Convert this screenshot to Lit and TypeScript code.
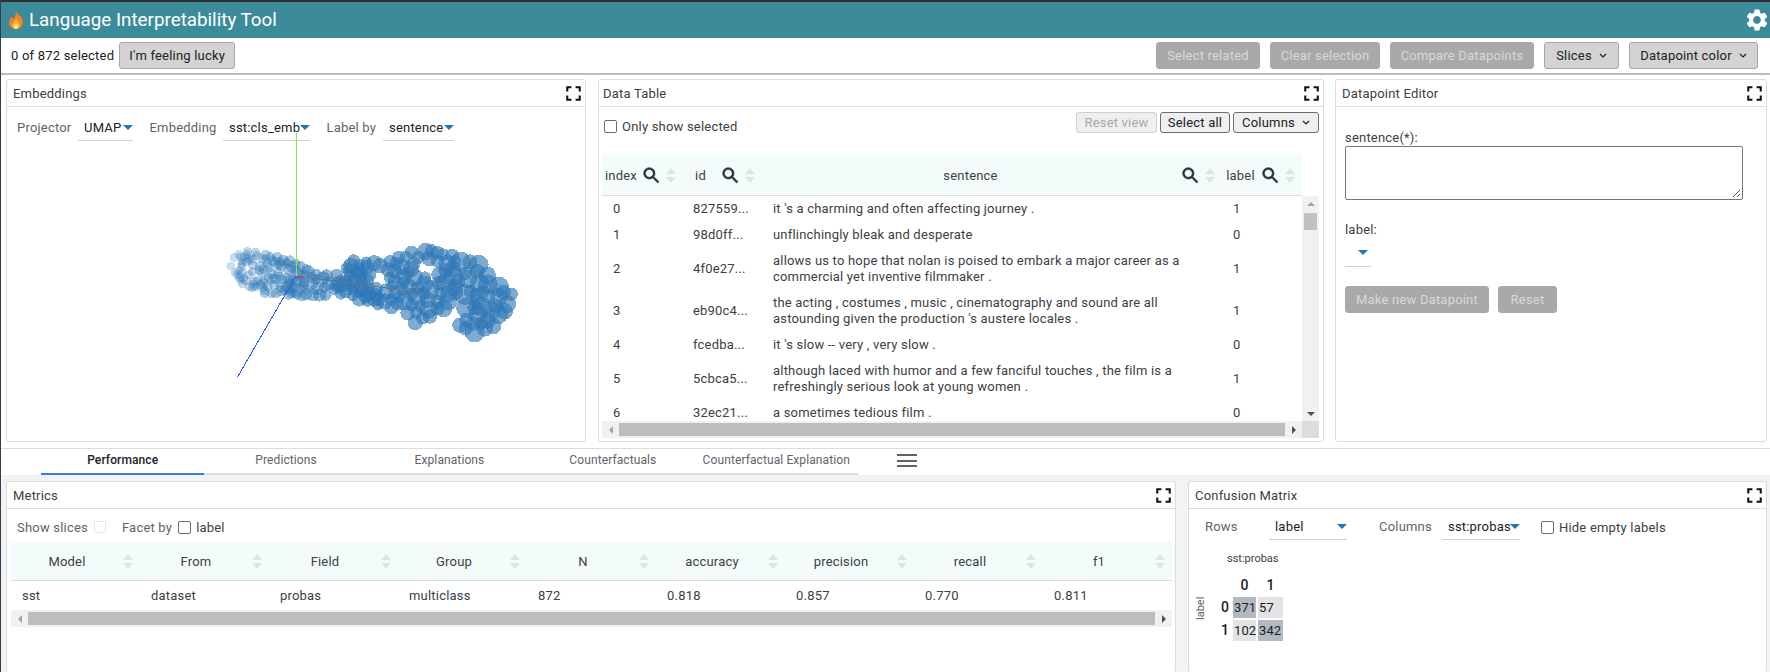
import { LitElement, html, css, svg } from "lit";
import { customElement } from "lit/decorators.js";

const FULLSCREEN = "M7 14H5v5h5v-2H7v-3zm-2-4h2V7h3V5H5v5zm12 7h-3v2h5v-5h-2v3zM14 5v2h3v3h2V5h-5z";
const SEARCH = "M15.5 14h-.79l-.28-.27A6.47 6.47 0 0 0 16 9.5 6.5 6.5 0 1 0 9.5 16c1.61 0 3.09-.59 4.23-1.57l.27.28v.79l5 4.99L20.49 19l-4.99-5zm-6 0C7.01 14 5 11.99 5 9.5S7.01 5 9.5 5 14 7.01 14 9.5 11.99 14 9.5 14z";
const GEAR = "M19.14 12.94c.04-.3.06-.61.06-.94 0-.32-.02-.64-.07-.94l2.03-1.58a.49.49 0 0 0 .12-.61l-1.92-3.32a.488.488 0 0 0-.59-.22l-2.39.96c-.5-.38-1.03-.7-1.62-.94l-.36-2.54a.484.484 0 0 0-.48-.41h-3.84c-.24 0-.43.17-.47.41l-.36 2.54c-.59.24-1.13.57-1.62.94l-2.39-.96c-.22-.08-.47 0-.59.22L2.74 8.87c-.12.21-.08.47.12.61l2.03 1.58c-.05.3-.09.63-.09.94s.02.64.07.94l-2.03 1.58a.49.49 0 0 0-.12.61l1.92 3.32c.12.22.37.29.59.22l2.39-.96c.5.38 1.03.7 1.62.94l.36 2.54c.05.24.24.41.48.41h3.84c.24 0 .44-.17.47-.41l.36-2.54c.59-.24 1.13-.56 1.62-.94l2.39.96c.22.08.47 0 .59-.22l1.92-3.32c.12-.22.07-.47-.12-.61l-2.01-1.58zM12 15.6c-1.98 0-3.6-1.62-3.6-3.6s1.62-3.6 3.6-3.6 3.6 1.62 3.6 3.6-1.62 3.6-3.6 3.6z";

const ROWS = [
  ["0", "827559...", ["it 's a charming and often affecting journey ."], "1"],
  ["1", "98d0ff...", ["unflinchingly bleak and desperate"], "0"],
  ["2", "4f0e27...", ["allows us to hope that nolan is poised to embark a major career as a", "commercial yet inventive filmmaker ."], "1"],
  ["3", "eb90c4...", ["the acting , costumes , music , cinematography and sound are all", "astounding given the production 's austere locales ."], "1"],
  ["4", "fcedba...", ["it 's slow -- very , very slow ."], "0"],
  ["5", "5cbca5...", ["although laced with humor and a few fanciful touches , the film is a", "refreshingly serious look at young women ."], "1"],
  ["6", "32ec21...", ["a sometimes tedious film ."], "0"],
] as const;

const METRIC_HEAD = ["Model", "From", "Field", "Group", "N", "accuracy", "precision", "recall", "f1"];
const METRIC_ROW = ["sst", "dataset", "probas", "multiclass", "872", "0.818", "0.857", "0.770", "0.811"];
const TABS = ["Performance", "Predictions", "Explanations", "Counterfactuals", "Counterfactual Explanation"];

// Silhouette of the projected point cloud, in page coordinates.
const OUTLINE: [number, number][] = ([
  [78, 375], [95, 325], [150, 320], [210, 332], [260, 345], [300, 360], [350, 390], [410, 388], [408, 368], [450, 343],
  [510, 348], [550, 340], [590, 333], [630, 318], [680, 306], [750, 323], [800, 343], [850, 353], [880, 408], [940, 423],
  [950, 500], [908, 535], [892, 578], [790, 604], [750, 560], [778, 492], [720, 528], [700, 554], [650, 574], [618, 548],
  [603, 522], [560, 522], [500, 496], [440, 494], [420, 475], [340, 488], [290, 482], [220, 481], [170, 466], [105, 434],
] as [number, number][]).map(([x, y]) => [200 + x / 3, 140 + y / 3] as [number, number]);

function inside(x: number, y: number) {
  let c = false;
  for (let i = 0, j = OUTLINE.length - 1; i < OUTLINE.length; j = i++) {
    const [xi, yi] = OUTLINE[i];
    const [xj, yj] = OUTLINE[j];
    if (yi > y !== yj > y && x < ((xj - xi) * (y - yi)) / (yj - yi) + xi) c = !c;
  }
  return c;
}

function makePoints() {
  let a = 20240611;
  const rnd = () => {
    a = (a + 0x6d2b79f5) | 0;
    let t = Math.imul(a ^ (a >>> 15), 1 | a);
    t = (t + Math.imul(t ^ (t >>> 7), 61 | t)) ^ t;
    return ((t ^ (t >>> 14)) >>> 0) / 4294967296;
  };
  const pts: { x: number; y: number; r: number; o: number }[] = [];
  const holes = [[378, 278, 3], [427, 268, 2]];
  const fill = (x0: number, x1: number, count: number, minGap: number) => {
    let placed = 0;
    let guard = 0;
    while (placed < count && guard++ < 40000) {
      const x = x0 + rnd() * (x1 - x0);
      const y = 243 + rnd() * 100;
      const t = Math.min(1, Math.max(0, (x - 225) / 230));
      const r = 4.2 + t * (2.2 + rnd() * 4.2);
      const e = r * 0.7;
      if (![[0, 0], [e, 0], [-e, 0], [0, e], [0, -e]].every(([u, v]) => inside(x + u, y + v))) continue;
      if (holes.some(([hx, hy, hr]) => Math.hypot(x - hx, y - hy) < hr + r)) continue;
      if (pts.some((p) => Math.hypot(p.x - x, p.y - y) < minGap * Math.min(r, p.r))) continue;
      pts.push({ x, y, r, o: 0.24 + Math.min(1, t * 1.8) * 0.38 });
      placed++;
    }
  };
  fill(225, 300, 95, 0.55);
  fill(300, 380, 65, 0.6);
  fill(380, 520, 105, 0.85);
  return pts;
}
const POINTS = makePoints();

@customElement("app-root")
export class AppRoot extends LitElement {
  static styles = css`
    :host {
      display: block;
      width: 1770px;
      height: 672px;
      overflow: hidden;
      font-family: Roboto, "Noto Sans", sans-serif;
      font-size: 13px;
      letter-spacing: 0.2px;
      color: #202124;
      background: #fff;
    }
    * { box-sizing: border-box; }
    .page { height: 672px; display: flex; flex-direction: column; border-left: 1px solid #3a3a4a; }
    .app-bar {
      flex: 0 0 38px;
      border-top: 2px solid #2d2f33;
      background: #3c8b9b;
      display: flex;
      align-items: center;
      padding: 0 0 0 7px;
      color: #fff;
      font-size: 18.8px;
      letter-spacing: 0;
      gap: 5px;
    }
    .app-bar .title { flex: 1; }
    .flame { width: 16px; height: 18px; }
    .gear { width: 26px; height: 26px; fill: #fff; }
    .toolbar {
      flex: 0 0 37px;
      border-bottom: 2px solid #bdbdbd;
      display: flex;
      align-items: center;
      padding: 0 12px 0 11px;
      gap: 10px;
    }
    .toolbar .sel { margin-right: -5px; margin-left: -1px; }
    .spacer { flex: 1; }
    .btn {
      height: 27px;
      display: inline-flex;
      align-items: center;
      justify-content: center;
      background: #d3d3d3;
      border: 1px solid #a6a6a6;
      border-radius: 3px;
      color: #202124;
      white-space: nowrap;
    }
    .btn.off { background: #a9a9a9; border-color: #a9a9a9; color: #d8d8d8; }
    .chev { width: 8px; height: 5px; margin-left: 7px; fill: none; stroke: currentColor; stroke-width: 1.2; }
    .top {
      flex: 0 0 374px;
      min-height: 0;
      display: flex;
      padding: 4px 3px 6px 5px;
      gap: 12px;
      border-bottom: 1px solid #dadce0;
    }
    .panel {
      position: relative;
      background: #fff;
      border: 1px solid #dadce0;
      border-radius: 3px;
      display: flex;
      flex-direction: column;
      min-width: 0;
      min-height: 0;
    }
    .p-emb { flex: 0 0 580px; }
    .p-data { flex: 0 0 726px; margin-right: -1px; }
    .p-edit { flex: 0 0 432px; }
    .p-title {
      flex: 0 0 27px;
      display: flex;
      align-items: center;
      justify-content: space-between;
      border-bottom: 1px solid #dadce0;
      padding: 0 0 0 6px;
      color: #3c4043;
    }
    .p-data .p-title { padding-left: 4px; }
    .fs { width: 25px; height: 25px; fill: #111; margin-right: -1px; }
    .controls { display: flex; align-items: flex-start; padding: 11px 0 0 10px; }
    .ctl-label { color: #5f6368; line-height: 20px; }
    .select {
      position: relative;
      height: 23px;
      border-bottom: 1px solid #d0d0d0;
      padding-left: 6px;
      line-height: 20px;
      color: #202124;
    }
    .caret {
      position: absolute;
      right: 0;
      top: 7px;
      width: 0;
      height: 0;
      border-left: 5px solid transparent;
      border-right: 5px solid transparent;
      border-top: 5.5px solid #1f78b4;
    }
    .scatter { position: absolute; left: 0; top: 0; width: 580px; height: 363px; pointer-events: none; }
    .cb {
      width: 13px;
      height: 13px;
      border: 1.5px solid #6b6b6b;
      border-radius: 2px;
      background: #fff;
      flex: none;
    }
    .dt-bar { display: flex; justify-content: space-between; padding: 5px 4px 0 5px; flex: 0 0 48px; }
    .only { display: flex; align-items: center; gap: 5px; height: 24px; margin-top: 2px; color: #3c4043; }
    .dt-btns { display: flex; gap: 3px; }
    .dt-btns .btn { height: 21px; background: #efefef; border-color: #6d6d6d; }
    .dt-btns .btn.off { border-color: #d0d0d0; color: #a9a9a9; }
    .grid-wrap { margin-left: 3px; margin-right: 4px; flex: 1; min-height: 0; display: flex; flex-direction: column; }
    .thead {
      flex: 0 0 41px;
      margin-right: 17px;
      background: #f4fcfb;
      border-bottom: 1px solid #dadce0;
      display: grid;
      grid-template-columns: 80px 80px 460px 80px;
      color: #3c4043;
    }
    .th { display: flex; align-items: center; padding-right: 7px; gap: 8px; }
    .th .name { flex: 1; text-align: center; padding-left: 3px; }
    .search { width: 21px; height: 21px; margin: 0 -4px; fill: #263238; stroke: #263238; stroke-width: 0.7; flex: none; }
    .sort { width: 10px; height: 16px; flex: none; display: flex; flex-direction: column; justify-content: center; gap: 3px; align-items: center; }
    .up, .down { width: 0; height: 0; border-left: 5px solid transparent; border-right: 5px solid transparent; }
    .up { border-bottom: 6px solid #dfe3e5; }
    .down { border-top: 6px solid #dfe3e5; }
    .tbody-row { flex: 1; min-height: 0; display: flex; }
    .tbody { flex: 1; overflow: hidden; }
    .tr { display: grid; grid-template-columns: 80px 80px 460px 80px; align-items: center; padding: 5px 0; line-height: 16px; color: #3c4043; }
    .td { padding-left: 11px; }
    .vbar { flex: 0 0 17px; background: #f1f1f1; position: relative; display: flex; flex-direction: column; align-items: center; justify-content: space-between; padding: 6px 0 5px; }
    .vthumb { position: absolute; left: 2px; right: 2px; top: 17px; height: 17px; background: #c1c1c1; }
    .tri-u, .tri-d { width: 0; height: 0; border-left: 4px solid transparent; border-right: 4px solid transparent; }
    .tri-u { border-bottom: 4px solid #a3a3a3; }
    .tri-d { border-top: 4px solid #505050; }
    .hbar { flex: 0 0 17px; height: 17px; background: #f1f1f1; display: flex; align-items: center; }
    .hbar .thumb { flex: 1; height: 13px; background: #bdbdbd; }
    .tri-l, .tri-r { width: 0; height: 0; border-top: 4px solid transparent; border-bottom: 4px solid transparent; margin: 0 6.5px; flex: none; }
    .tri-l { border-right: 4px solid #a3a3a3; }
    .tri-r { border-left: 4px solid #505050; }
    .corner { flex: 0 0 17px; height: 17px; background: #dcdcdc; }
    .dt-hbar { display: flex; margin-bottom: 3px; flex: 0 0 17px; }
    .dt-hbar .hbar { flex: 1; }
    .edit-body { padding: 0 9px; flex: 1; display: flex; flex-direction: column; }
    .edit-label { line-height: 16px; color: #3c4043; }
    .l-sentence { margin-top: 23px; }
    .l-label { margin-top: 22px; }
    .textarea { width: 398px; height: 54px; border: 1px solid #767676; border-radius: 2px; position: relative; }
    .grip { position: absolute; right: 1px; bottom: 1px; width: 9px; height: 9px; }
    .edit-select { width: 26px; height: 25px; border-bottom: 1px solid #d0d0d0; position: relative; margin-top: 4px; }
    .edit-select .caret { right: 3px; top: 8px; }
    .edit-btns { display: flex; gap: 9px; margin-top: 19px; }
    .tabs { flex: 0 0 26px; display: flex; align-items: center; padding-left: 40px; background: #fff; }
    .tab {
      width: 163.4px;
      height: 26px;
      display: flex;
      align-items: center;
      justify-content: center;
      border-bottom: 2px solid #dadce0;
      color: #5f6368;
      padding-bottom: 2px;
      font-size: 12px;
      letter-spacing: 0.1px;
    }
    .tab.on { color: #202124; border-bottom: 2px solid #3b78e7; font-weight: 500; }
    .burger { width: 20px; height: 13px; margin: 0 0 3px 39px; display: flex; flex-direction: column; justify-content: space-between; }
    .burger i { display: block; height: 2px; background: #5f6368; }
    .bottom { flex: 1; min-height: 0; background: #f1f3f4; display: flex; padding: 6px 3px 0 5px; gap: 12px; }
    .p-met { flex: 0 0 1170px; border-bottom: none; }
    .p-cm { flex: 1; border-bottom: none; }
    .met-controls { display: flex; align-items: center; flex: 0 0 33px; padding: 3px 0 0 10px; color: #5f6368; }
    .met-controls .cb { margin-left: 6px; }
    .cb.light { border: 1px solid #e6e6e6; width: 12px; height: 12px; }
    .facet { margin-left: 16px; }
    .facet-val { margin-left: 5px; color: #3c4043; }
    .met-grid { margin: 0 3px 0 4px; }
    .m-head, .m-row { display: grid; grid-template-columns: repeat(9, 129px); }
    .m-head { height: 39px; background: #f4fcfb; border-bottom: 1px solid #dadce0; color: #3c4043; }
    .m-th { display: flex; align-items: center; padding-right: 7px; }
    .m-th .name { flex: 1; text-align: center; }
    .m-row { height: 29px; align-items: center; color: #3c4043; }
    .m-td { padding-left: 11px; }
    .cm-controls { display: flex; align-items: flex-start; padding: 8px 0 0 16px; }
    .cm-hide { display: flex; align-items: center; gap: 5px; margin-left: 21px; height: 20px; color: #3c4043; }
    .matrix { display: grid; grid-template-columns: 22px 17px 25px 25px; margin: 11px 0 0 5px; color: #202124; }
    .mx-top { grid-column: 2 / 5; font-size: 11px; color: #3c4043; height: 26px; line-height: 16px; padding-left: 11px; letter-spacing: 0; }
    .mx-head { height: 20px; line-height: 16px; text-align: center; font-weight: 500; font-size: 14px; padding-right: 2px; }
    .mx-head.b { padding-right: 0; }
    .mx-head.first { grid-column: 3; }
    .mx-side { grid-row: 3 / 5; grid-column: 1; writing-mode: vertical-rl; transform: rotate(180deg); font-size: 11px; text-align: right; color: #5f6368; justify-self: start; height: 44px; letter-spacing: 0; }
    .mx-rh { grid-column: 2; font-weight: 500; font-size: 14px; text-align: right; padding-right: 4px; line-height: 21px; height: 23px; letter-spacing: 0; }
    .mx-c { height: 21px; margin: 0 2px 2px 0; line-height: 21px; padding-left: 1px; letter-spacing: 0.1px; }
    .mx-c.b { margin-right: 0; }
    .hi { background: #b3b9c0; }
    .lo { background: #e3e3e3; }
    .sp { flex: 0 0 16.5px; }
    .sp-cm { flex: 0 0 32px; }
  `;

  private fs() {
    return html`<svg class="fs" viewBox="0 0 24 24"><path d="${FULLSCREEN}"></path></svg>`;
  }
  private sort() {
    return html`<span class="sort"><span class="up"></span><span class="down"></span></span>`;
  }
  private select(text: string, width: number) {
    return html`<div class="select" style="width:${width}px">${text}<span class="caret"></span></div>`;
  }
  private chev() {
    return html`<svg class="chev" viewBox="0 0 8 5"><path d="M1 1l3 3 3-3"></path></svg>`;
  }
  private btn(text: string, w: number, off = false, chev = false) {
    return html`<div class="btn ${off ? "off" : ""}" style="width:${w}px">${text}${chev ? this.chev() : ""}</div>`;
  }
  private ctlLabel(text: string, width: number) {
    return html`<div class="ctl-label" style="width:${width}px">${text}</div>`;
  }

  private scatter() {
    return html`<svg class="scatter" viewBox="6 79 580 363">
      ${POINTS.map((p) => svg`<circle cx=${p.x.toFixed(1)} cy=${p.y.toFixed(1)} r=${p.r.toFixed(1)} fill="#2f78b7" fill-opacity=${p.o.toFixed(2)} shape-rendering="crispEdges"></circle>`)}
      <g shape-rendering="crispEdges">
        <line x1="295" y1="275" x2="430" y2="293" stroke="#6b7480" stroke-width="1"></line>
        <line x1="295.500" y1="275" x2="295.500" y2="132" stroke="#85e650" stroke-width="1"></line>
        <line x1="295" y1="275.500" x2="303" y2="275.500" stroke="#e8333a" stroke-width="1"></line>
        <line x1="295" y1="275" x2="236.500" y2="376" stroke="#2a5cf0" stroke-width="1"></line>
      </g>
    </svg>`;
  }

  render() {
    return html`<div class="page">
      <div class="app-bar">
        <svg class="flame" viewBox="0 0 16 18">
          <path d="M8 0c1 3 5 5 6.500 8.500C16 12.500 13.500 18 8 18S0 13.500 1.500 9.500C2 8 3 7 3.500 5.500 4.500 6.500 5 7.500 5 8.500 6.500 6 8.500 3.500 8 0z" fill="#f4801f"></path>
          <path d="M8.200 7c.5 2.300 4 3.800 4 7 0 2.300-1.900 4-4.200 4s-4.200-1.700-4.200-3.900C3.800 11.600 7.500 10 8.200 7z" fill="#fbb034"></path>
          <path d="M8.100 11.500c.4 1.300 2 2 2 3.700 0 1.500-1 2.800-2.100 2.800s-2.100-1.200-2.100-2.600c0-1.700 1.800-2.500 2.200-3.900z" fill="#ffe27a"></path>
        </svg>
        <div class="title">Language Interpretability Tool</div>
        <svg class="gear" viewBox="0 0 24 24"><path d="${GEAR}"></path></svg>
      </div>
      <div class="toolbar">
        <div class="sel">0 of 872 selected</div>
        ${this.btn("I'm feeling lucky", 116)}
        <div class="spacer"></div>
        ${this.btn("Select related", 104, true)}
        ${this.btn("Clear selection", 110, true)}
        ${this.btn("Compare Datapoints", 144, true)}
        ${this.btn("Slices", 75, false, true)}
        ${this.btn("Datapoint color", 129, false, true)}
      </div>
      <div class="top">
        <div class="panel p-emb">
          <div class="p-title">Embeddings${this.fs()}</div>
          <div class="controls">
            ${this.ctlLabel("Projector", 61)}
            ${this.select("UMAP", 55)}
            <div class="sp"></div>
            ${this.ctlLabel("Embedding", 73.5)}
            ${this.select("sst:cls_emb", 87)}
            <div class="sp"></div>
            ${this.ctlLabel("Label by", 56.5)}
            ${this.select("sentence", 71)}
          </div>
          ${this.scatter()}
        </div>
        <div class="panel p-data">
          <div class="p-title">Data Table${this.fs()}</div>
          <div class="dt-bar">
            <div class="only"><span class="cb"></span>Only show selected</div>
            <div class="dt-btns">
              ${this.btn("Reset view", 81, true)}
              ${this.btn("Select all", 70)}
              ${this.btn("Columns", 86, false, true)}
            </div>
          </div>
          <div class="grid-wrap">
            <div class="thead">
              ${["index", "id", "sentence", "label"].map(
                (n) => html`<div class="th"><span class="name">${n}</span><svg class="search" viewBox="0 0 24 24"><path d="${SEARCH}"></path></svg>${this.sort()}</div>`
              )}
            </div>
            <div class="tbody-row">
              <div class="tbody">
                ${ROWS.map(
                  (r) => html`<div class="tr">
                    <div class="td">${r[0]}</div>
                    <div class="td">${r[1]}</div>
                    <div class="td">${(r[2] as readonly string[]).map((l) => html`<div>${l}</div>`)}</div>
                    <div class="td">${r[3]}</div>
                  </div>`
                )}
              </div>
              <div class="vbar"><span class="tri-u"></span><div class="vthumb"></div><span class="tri-d"></span></div>
            </div>
            <div class="dt-hbar">
              <div class="hbar"><span class="tri-l"></span><div class="thumb"></div><span class="tri-r"></span></div>
              <div class="corner"></div>
            </div>
          </div>
        </div>
        <div class="panel p-edit">
          <div class="p-title">Datapoint Editor${this.fs()}</div>
          <div class="edit-body">
            <div class="edit-label l-sentence">sentence(*):</div>
            <div class="textarea">
              <svg class="grip" viewBox="0 0 9 9"><path d="M1 8l7-7M5 8l3-3" stroke="#555" stroke-width="1"></path></svg>
            </div>
            <div class="edit-label l-label">label:</div>
            <div class="edit-select"><span class="caret"></span></div>
            <div class="edit-btns">
              ${this.btn("Make new Datapoint", 144, true)}
              ${this.btn("Reset", 59, true)}
            </div>
          </div>
        </div>
      </div>
      <div class="tabs">
        ${TABS.map((t, i) => html`<div class="tab ${i === 0 ? "on" : ""}">${t}</div>`)}
        <div class="burger"><i></i><i></i><i></i></div>
      </div>
      <div class="bottom">
        <div class="panel p-met">
          <div class="p-title">Metrics${this.fs()}</div>
          <div class="met-controls">
            <span>Show slices</span><span class="cb light"></span>
            <span class="facet">Facet by</span><span class="cb"></span>
            <span class="facet-val">label</span>
          </div>
          <div class="met-grid">
            <div class="m-head">
              ${METRIC_HEAD.map((h) => html`<div class="m-th"><span class="name">${h}</span>${this.sort()}</div>`)}
            </div>
            <div class="m-row">${METRIC_ROW.map((c) => html`<div class="m-td">${c}</div>`)}</div>
            <div class="hbar"><span class="tri-l"></span><div class="thumb"></div><span class="tri-r"></span></div>
          </div>
        </div>
        <div class="panel p-cm">
          <div class="p-title">Confusion Matrix${this.fs()}</div>
          <div class="cm-controls">
            ${this.ctlLabel("Rows", 64)}
            ${this.select("label", 78)}
            <div class="sp-cm"></div>
            ${this.ctlLabel("Columns", 63)}
            ${this.select("sst:probas", 78)}
            <div class="cm-hide"><span class="cb"></span>Hide empty labels</div>
          </div>
          <div class="matrix">
            <div class="mx-top">sst:probas</div>
            <div class="mx-head first">0</div><div class="mx-head b">1</div>
            <div class="mx-side">label</div>
            <div class="mx-rh">0</div><div class="mx-c hi">371</div><div class="mx-c b lo">57</div>
            <div class="mx-rh">1</div><div class="mx-c lo">102</div><div class="mx-c b hi">342</div>
          </div>
        </div>
      </div>
    </div>`;
  }
}
